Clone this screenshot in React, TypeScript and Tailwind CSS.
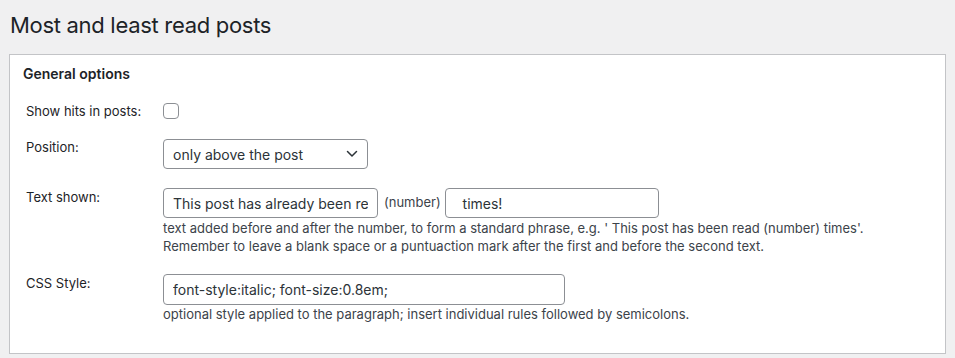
import React from 'react';

const inputCls =
  'h-[30px] rounded-[4px] border border-[#8c8f94] bg-white px-[9px] text-[14px] text-[#2c3338] outline-none';

function Label({ children, className = '' }: { children: React.ReactNode; className?: string }) {
  return <div className={`w-[137px] shrink-0 text-[13px] leading-[16px] text-[#1d2327] ${className}`}>{children}</div>;
}

export default function App() {
  return (
    <div className="min-h-screen bg-[#f0f0f1] px-[9px] pt-[11px] font-['Inter',sans-serif] text-[#1d2327]">
      <h1 className="pl-[1px] text-[22px] leading-[28px] font-normal tracking-[-0.3px]">Most and least read posts</h1>

      <div className="mt-[15px] h-[300px] w-[937px] border border-[#c3c4c7] bg-white pl-[13px] pt-[9px]">
        <h2 className="text-[14px] leading-[20px] font-semibold">General options</h2>

        {/* show hits */}
        <div className="mt-[19px] flex items-center pl-[3px]">
          <Label>Show hits in posts:</Label>
          <span className="h-[16px] w-[16px] rounded-[4px] border border-[#8c8f94] bg-white" />
        </div>

        {/* position */}
        <div className="mt-[20px] flex pl-[3px]">
          <Label className="pt-0">Position:</Label>
          <div className="flex h-[30px] w-[205px] items-center justify-between rounded-[4px] border border-[#8c8f94] pl-[9px] pr-[9px] text-[14px] text-[#2c3338]">
            <span>only above the post</span>
            <svg width="12" height="8" viewBox="0 0 12 8" fill="none">
              <path d="M1.5 1.5 6 6l4.5-4.5" stroke="#2c3338" strokeWidth="1.5" strokeLinecap="round" strokeLinejoin="round" />
            </svg>
          </div>
        </div>

        {/* text shown */}
        <div className="mt-[19px] flex pl-[3px]">
          <Label className="pt-[1px]">Text shown:</Label>
          <div>
            <div className="flex items-center">
              <input readOnly value="This post has already been read" className={`${inputCls} w-[215px]`} />
              <span className="ml-[6px] mr-[4px] text-[13px] text-[#3c434a]">(number)</span>
              <input readOnly value="  times!" className={`${inputCls} w-[214px]`} />
            </div>
            <p className="mt-[1px] text-[13px] leading-[18px] text-[#3c434a]">
              text added before and after the number, to form a standard phrase, e.g. ' This post has been read (number) times'.
              <br />
              Remember to leave a blank space or a puntuaction mark after the first and before the second text.
            </p>
          </div>
        </div>

        {/* css style */}
        <div className="mt-[19px] flex pl-[3px]">
          <Label className="pt-[1px]">CSS Style:</Label>
          <div>
            <input readOnly value="font-style:italic; font-size:0.8em;" className={`${inputCls} h-[31px] w-[402px]`} />
            <p className="text-[13px] leading-[18px] text-[#3c434a]">
              optional style applied to the paragraph; insert individual rules followed by semicolons.
            </p>
          </div>
        </div>
      </div>
    </div>
  );
}
